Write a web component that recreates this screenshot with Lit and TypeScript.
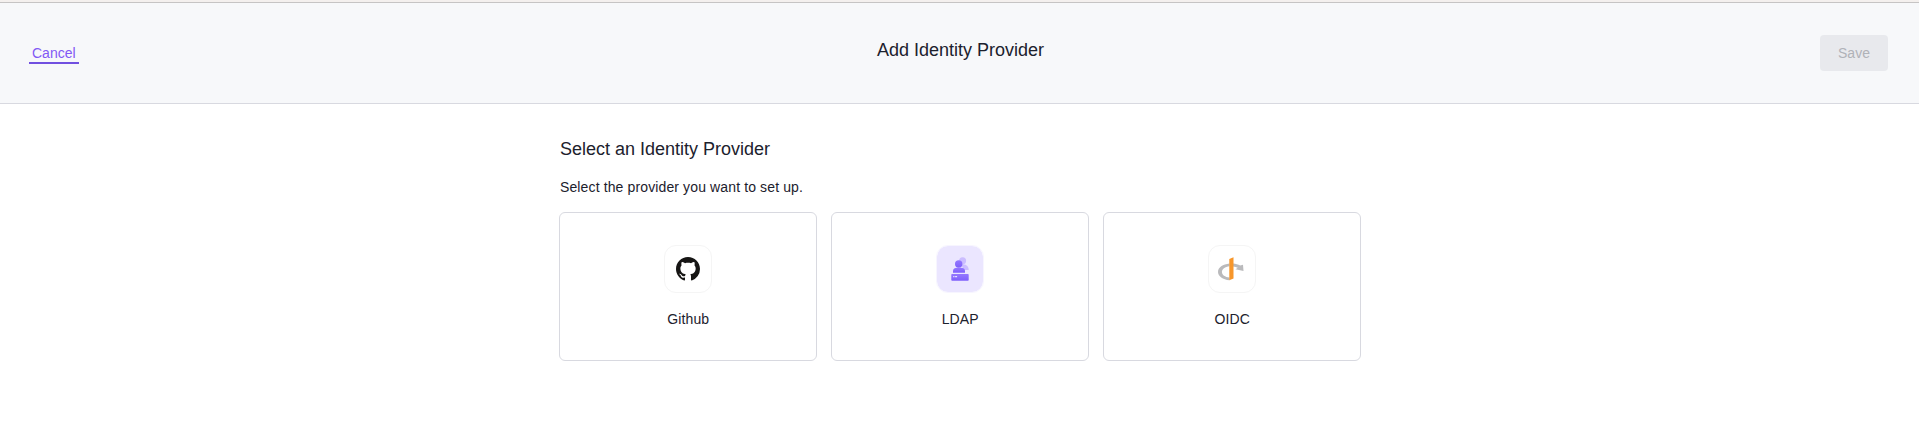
import { LitElement, html, css, svg } from "lit";
import { customElement } from "lit/decorators.js";

const githubIcon = svg`<svg width="24" height="24" viewBox="0 0 16 16"><path fill="#161514" fill-rule="evenodd" d="M8 0C3.58 0 0 3.58 0 8c0 3.54 2.29 6.53 5.47 7.59.4.07.55-.17.55-.38 0-.19-.01-.82-.01-1.49-2.01.37-2.53-.49-2.69-.94-.09-.23-.48-.94-.82-1.13-.28-.15-.68-.52-.01-.53.63-.01 1.08.58 1.23.82.72 1.21 1.87.87 2.33.66.07-.52.28-.87.51-1.07-1.78-.2-3.64-.89-3.64-3.95 0-.87.31-1.59.82-2.15-.08-.2-.36-1.02.08-2.12 0 0 .67-.21 2.2.82.64-.18 1.32-.27 2-.27s1.36.09 2 .27c1.53-1.04 2.2-.82 2.2-.82.44 1.1.16 1.92.08 2.12.51.56.82 1.27.82 2.15 0 3.07-1.87 3.75-3.65 3.95.29.25.54.73.54 1.48 0 1.07-.01 1.93-.01 2.2 0 .21.15.46.55.38A8.01 8.01 0 0 0 16 8c0-4.42-3.58-8-8-8z"/></svg>`;

const ldapIcon = svg`<svg width="24" height="24" viewBox="0 0 24 24">
  <defs><linearGradient id="violet" x1="0" y1="0" x2="0" y2="1"><stop offset="0" stop-color="#9478ff"/><stop offset="1" stop-color="#7f60fb"/></linearGradient></defs>
  <circle cx="14.600" cy="3.700" r="3.500" fill="#cbbdff"/><path fill="#cbbdff" d="M13 7c4.800 0 7.700 2 7.700 6h-5z"/>
  <circle cx="10.700" cy="7" r="3.700" fill="url(#violet)"/>
  <path fill="url(#violet)" d="M5 15.800v-1.700c0-2.200 1.800-3.300 4-3.300h4c2.200 0 4 1.100 4 3.300v1.700z"/>
  <rect x="3.300" y="17" width="17.400" height="6.700" rx=".8" fill="url(#violet)"/>
  <path stroke="#e9e3ff" stroke-width="1.300" d="M5.200 19.600h1.300M7.100 19.600h2"/></svg>`;

const oidcIcon = svg`<svg width="28" height="24" viewBox="0 0 28 24">
  <path fill="#bababc" d="M11.500 6.600C4.800 7.300 0 10.500 0 14.900S4.800 22.400 11.500 23.300v-2.700C7 20 3.900 18 3.900 15S7 10 11.500 9.300zM15 6.600c2.700.2 5.200.9 7.200 2L25 7.700l.5 6.300-8-1.800 2.400-1.400c-1.200-.6-3-1.200-4.900-1.400z"/>
  <path fill="#f7962a" d="M11.300 2.100 15.500.2v21.200l-4.200 1.900z"/></svg>`;

@customElement("app-root")
export class AppRoot extends LitElement {
  static styles = css`
    :host { display: block; height: 421px; background: #fff; color: #1c212d; font: 14px/20px "Liberation Sans", Arial, sans-serif; }
    .strip { height: 2px; background: #f4f0ee; border-bottom: 1px solid #c6c4c4; }
    header { box-sizing: border-box; height: 101px; padding: 0 31px 0 29px; display: grid; grid-template-columns: 1fr auto 1fr; background: #f7f8fa; border-bottom: 1px solid #d8d9e0; }
    .cancel { justify-self: start; margin-top: 40px; height: 19px; padding: 0 3px; border-bottom: 2px solid #7150e0; color: #8259f5; text-decoration: none; }
    h1, h2, p { margin: 0; font-weight: 400; }
    h1 { font-size: 18px; line-height: 24px; margin-top: 35px; padding-left: 4px; }
    .save { justify-self: end; margin-top: 32px; width: 68px; height: 36px; padding: 0; border: 0; border-radius: 4px; background: #e8e9ed; color: #b0b2b8; font: inherit; }
    main { width: 802px; margin: 0 auto; padding: 33px 0 0 1px; }
    h2 { font-size: 18px; line-height: 24px; padding-left: 1px; }
    p { margin-top: 16px; padding-left: 1px; letter-spacing: 0.125px; }
    .cards { display: grid; grid-template-columns: repeat(3, 258px); gap: 14px; margin-top: 15px; }
    .card { box-sizing: border-box; height: 149px; border: 1px solid #d8d9e0; border-radius: 6px; padding-top: 32px; display: flex; flex-direction: column; align-items: center; gap: 16px; letter-spacing: 0.125px; }
    .label { padding-left: 0.5px; }
    .tile { box-sizing: border-box; width: 48px; height: 48px; border: 1px solid #f5f5f5; border-radius: 12px; display: flex; align-items: center; justify-content: center; }
    .tinted { background: #ebe6ff; background-clip: padding-box; border-color: #f7f5ff; }
    svg { display: block; }
  `;

  private card(label: string, icon: unknown, tinted = false) {
    return html`<div class="card"><div class="tile ${tinted ? "tinted" : ""}">${icon}</div><span class="label">${label}</span></div>`;
  }

  render() {
    return html`
      <div class="strip"></div>
      <header>
        <a class="cancel">Cancel</a>
        <h1>Add Identity Provider</h1>
        <button class="save" disabled>Save</button>
      </header>
      <main>
        <h2>Select an Identity Provider</h2>
        <p>Select the provider you want to set up.</p>
        <div class="cards">
          ${this.card("Github", githubIcon)}
          ${this.card("LDAP", ldapIcon, true)}
          ${this.card("OIDC", oidcIcon)}
        </div>
      </main>`;
  }
}
